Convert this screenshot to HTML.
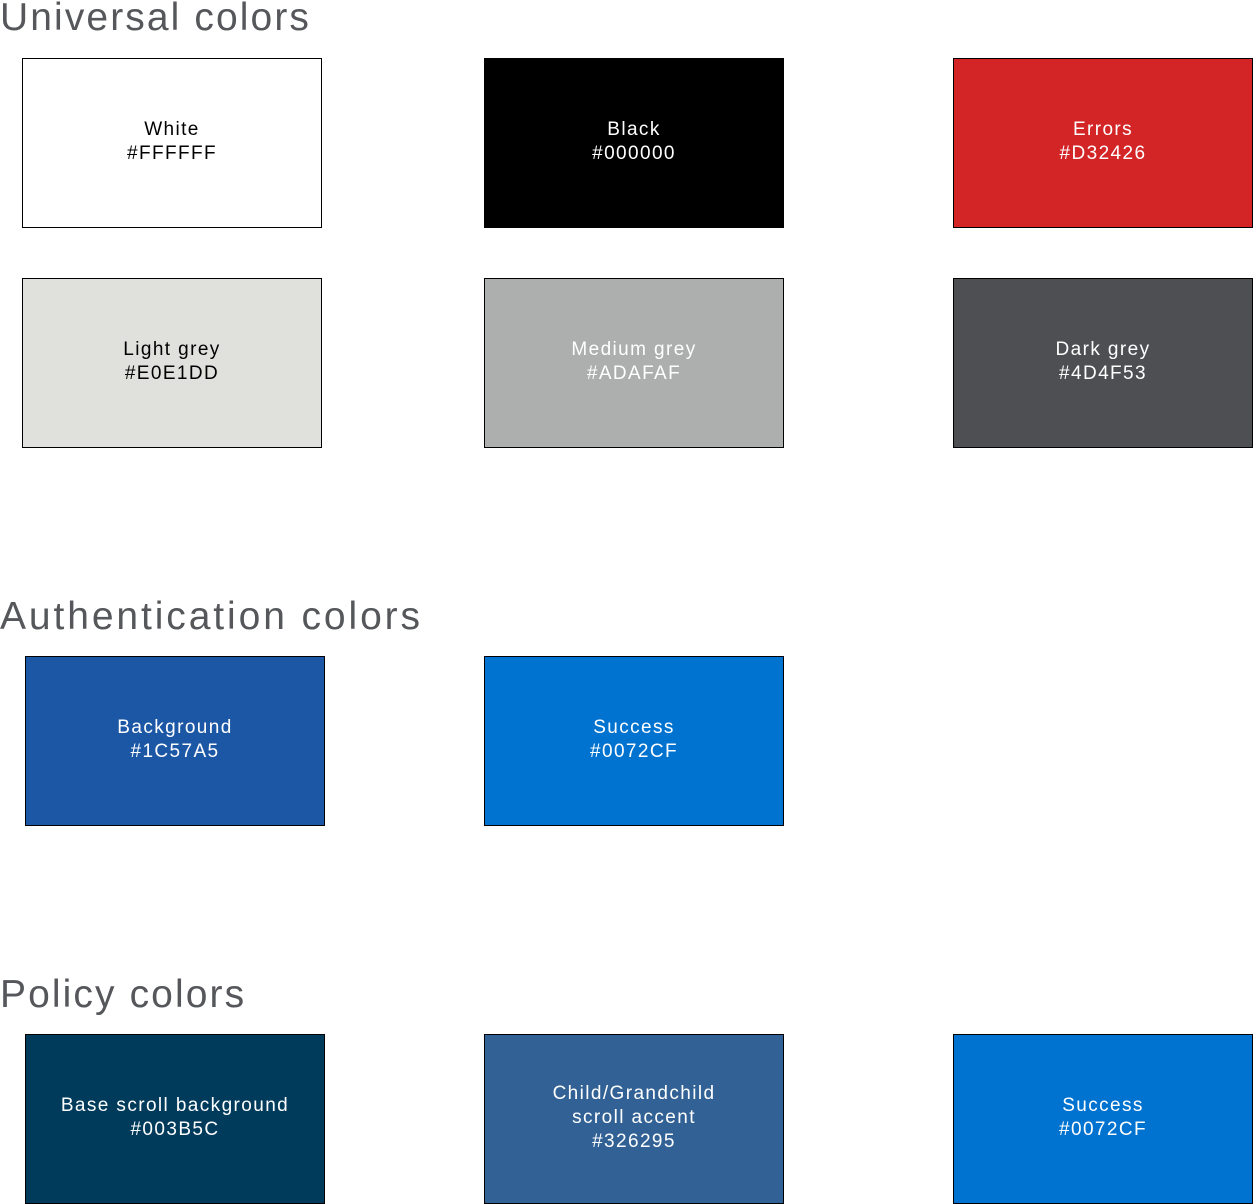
<!DOCTYPE html>
<html><head><meta charset="utf-8"><style>
html,body{margin:0;padding:0;background:#fff;}
body{width:1253px;height:1204px;position:relative;overflow:hidden;font-family:"Liberation Sans",sans-serif;}
h2{position:absolute;left:0;margin:0;font-weight:normal;font-size:39px;color:#55575b;line-height:40px;}
.b{position:absolute;width:298px;height:168px;border:1px solid #000;display:flex;align-items:center;justify-content:center;text-align:center;font-size:19px;line-height:24px;color:#fff;letter-spacing:1.4px;padding-bottom:2px;box-sizing:content-box;}
.b{height:166px;}
</style></head><body>
<h2 style="top:-2px;letter-spacing:2.1px">Universal colors</h2>
<div class="b" style="left:22px;top:58px;background:#fff;color:#000">White<br>#FFFFFF</div>
<div class="b" style="left:484px;top:58px;background:#000">Black<br>#000000</div>
<div class="b" style="left:953px;top:58px;background:#d32426">Errors<br>#D32426</div>
<div class="b" style="left:22px;top:278px;background:#e0e1dd;color:#000">Light grey<br>#E0E1DD</div>
<div class="b" style="left:484px;top:278px;background:#adafaf">Medium grey<br>#ADAFAF</div>
<div class="b" style="left:953px;top:278px;background:#4d4f53">Dark grey<br>#4D4F53</div>
<h2 style="top:597px;letter-spacing:2.9px">Authentication colors</h2>
<div class="b" style="left:25px;top:656px;background:#1c57a5">Background<br>#1C57A5</div>
<div class="b" style="left:484px;top:656px;background:#0072cf">Success<br>#0072CF</div>
<h2 style="top:975px;letter-spacing:2.1px">Policy colors</h2>
<div class="b" style="left:25px;top:1034px;background:#003b5c">Base scroll background<br>#003B5C</div>
<div class="b" style="left:484px;top:1034px;background:#326295">Child/Grandchild<br>scroll accent<br>#326295</div>
<div class="b" style="left:953px;top:1034px;background:#0072cf">Success<br>#0072CF</div>
</body></html>
